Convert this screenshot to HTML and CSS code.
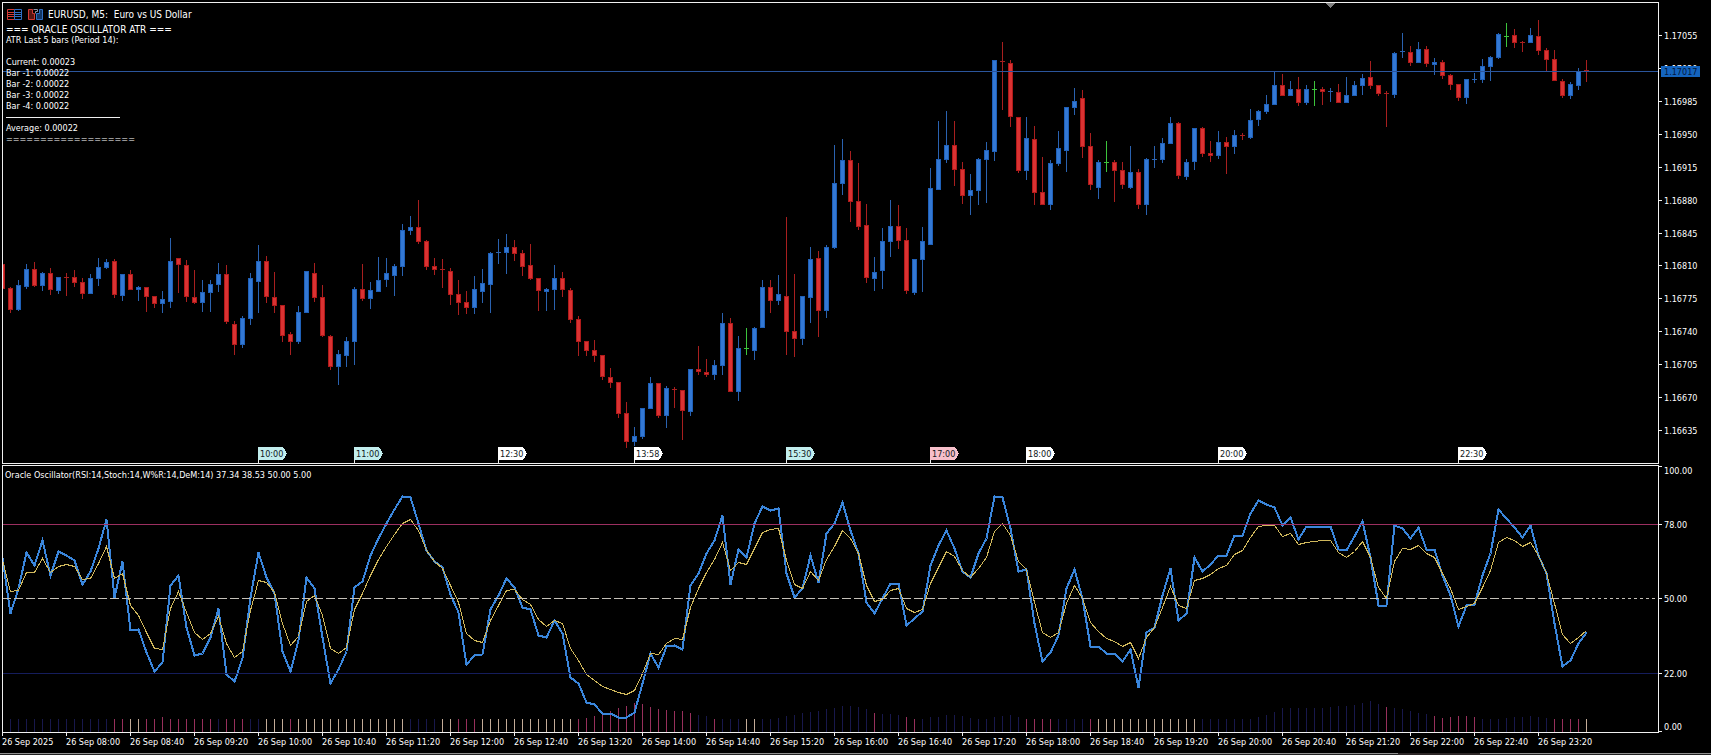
FILE: index.html
```html
<!DOCTYPE html>
<html lang="en">
<head>
    <meta charset="utf-8">
    <title>EURUSD, M5</title>
    <link rel="stylesheet" href="styles.css">
</head>
<body>
    <main class="terminal">
        <!-- Price chart -->
        <section class="panel price-panel">
            <svg id="price" class="plot"></svg>
            <div class="overlay">
                <h1 class="chart-title">
                    <svg class="icon" width="15" height="11" viewBox="0 0 15 11">
                        <path d="M7.5 .5H.5v10h7M1 3.5h6M1 5.5h6M1 7.5h6" fill="none" stroke="#d23a34"/>
                        <path d="M7.5 .5h7v10h-7zM8 3.5h6M8 5.5h6M8 7.5h6" fill="none" stroke="#2f6fc4"/>
                    </svg>
                    <svg class="icon" width="15" height="11" viewBox="0 0 15 11">
                        <path d="M.5 .5h4v4h2v6h-6z" fill="#5a1512" stroke="#d23a34"/>
                        <path d="M14.5 .5h-3v4h-3v6h6z" fill="#123766" stroke="#2f6fc4"/>
                        <path d="M5.5 .5h4v2h-2v2" fill="none" stroke="#8a94a8"/>
                    </svg>
                    <span>EURUSD, M5:&nbsp; Euro vs US Dollar</span>
                </h1>
                <div class="comment">
                    <p class="comment-title">=== ORACLE OSCILLATOR ATR ===</p>
                    <p>ATR Last 5 bars (Period 14):</p>
                    <p>&nbsp;</p>
                    <p>Current: 0.00023</p>
                    <p>Bar -1: 0.00022</p>
                    <p>Bar -2: 0.00022</p>
                    <p>Bar -3: 0.00022</p>
                    <p>Bar -4: 0.00022</p>
                    <hr>
                    <p>Average: 0.00022</p>
                    <p>===================</p>
                </div>
            </div>
        </section>
        <svg id="price-scale" class="scale"></svg>

        <!-- Oscillator -->
        <section class="panel osc-panel">
            <svg id="osc" class="plot"></svg>
            <h2 class="osc-title">Oracle Oscillator(RSI:14,Stoch:14,W%R:14,DeM:14) 37.34 38.53 50.00 5.00</h2>
        </section>
        <svg id="osc-scale" class="scale"></svg>

        <div id="times" class="times"></div>
    </main>
    <footer class="tabs"><span class="tab"></span></footer>
    <script src="chart.js"></script>
</body>
</html>
```
FILE: styles.css
```css
body {
    margin: 0;
    background-color: #000;
    color: #fff;
    font-family: "DejaVu Sans Condensed", "DejaVu Sans", sans-serif;
    font-stretch: condensed;
    font-size: 9px;
    line-height: 11px;
}
h1, h2, p {
    margin: 0;
    font-size: 9px;
    font-weight: normal;
    white-space: nowrap;
}
.terminal {
    display: grid;
    grid-template-columns: 1fr 52px;
    row-gap: 1px;
    padding: 2px 0 0 2px;
}
.panel {
    position: relative;
    border: 1px solid #f0f0f0;
    overflow: hidden;
}
.price-panel {
    height: 460px;
}
.osc-panel {
    height: 266px;
}
.plot {
    display: block;
    width: 100%;
    height: 100%;
    shape-rendering: crispEdges;
}
.scale {
    width: 100%;
    height: 100%;
    shape-rendering: crispEdges;
}
text {
    fill: #fff;
    font-size: 9px;
}

/* text over the price chart */
.overlay {
    position: absolute;
    top: 4px;
    left: 3px;
}
.chart-title {
    display: flex;
    align-items: center;
    gap: 6px;
    height: 14px;
    padding-left: 1px;
    font-size: 10px;
}
.chart-title span {
    margin-left: -1px;
}
.comment {
    padding-top: 3px;
}
.comment p {
    height: 11px;
}
.comment .comment-title {
    font-size: 10px;
}
.comment hr {
    width: 114px;
    margin: 5px 0;
    border: 0;
    border-top: 1px solid #f0f0f0;
}
.osc-title {
    position: absolute;
    top: 4px;
    left: 2px;
}

/* candles */
.up { fill: #3378d4; stroke: #1f60b8; }
.down { fill: #da3232; stroke: #b01a1a; }
.wick-up { fill: #2a62b0; }
.wick-down { fill: #a81f1f; }
.wick-flat { fill: #3cc43c; }
.bid { fill: #2b559c; }
.bid-box { fill: #1464be; }
.bid-text { fill: #03183c; }
.shift { fill: #808080; }

/* session flags */
.flag { fill: #fff; }
.flag.asia { fill: #c2eeee; }
.flag.close { fill: #f7bfca; }
.flag-text { fill: #101820; }
.tick { fill: #f0f0f0; }

/* oscillator */
.fast { fill: none; stroke: #3a86dc; stroke-width: 2; }
.slow { fill: none; stroke: #d0b85c; }
.level-high { fill: #9c2f60; }
.level-low { fill: #151d5c; }
.level-mid { stroke: #c4c0b8; stroke-dasharray: 9 3; }
.level-mid.future { stroke-dasharray: 3 3; }
.hist-n { fill: #18184c; }
.hist-r { fill: #98305c; }
.hist-w { fill: #c4ac98; }

.times {
    display: flex;
    height: 20px;
    margin-top: -1px;
    overflow: hidden;
}
.times span {
    flex: none;
    width: 64px;
    white-space: nowrap;
}
.times span::before {
    content: "";
    display: block;
    width: 1px;
    height: 3px;
    margin-bottom: 1px;
    background-color: #f0f0f0;
}
.tabs {
    height: 1px;
    border-top: 1px solid #909090;
    background-color: #222;
}
.tab {
    display: block;
    width: 82px;
    height: 2px;
    margin: -1px 231px 0 auto;
    background-color: #2c2626;
}
```
FILE: chart.js
```js
// one bar per 8px: colour, body top, body bottom, high, low
const bars = `r264 289 264 289,r288 310 287 313,b285 310 280 311,b269 287 264 289,r269 286 262 287,b273 286 272 291,r273 290 268 295,b277 291 277 294,r277 279 273 296,r277 283 270 287
r282 294 278 299,b278 294 274 294,b267 279 258 286,b262 268 259 269,r261 295 259 298,b274 296 274 301,r274 290 270 290,b287 290 286 301,r287 297 287 312,r296 304 296 308
b299 304 291 313,b261 302 238 308,r258 265 258 293,r265 297 260 302,r297 303 270 304,b292 303 280 312,b284 293 280 312,b274 285 263 292,r274 322 265 324,r324 345 321 355
b318 345 316 348,b278 319 273 325,b261 282 245 313,r261 297 256 303,r297 306 272 313,r305 336 305 342,r334 342 332 355,b312 342 306 344,b271 313 271 313,r273 298 263 302
r297 336 285 337,r336 367 335 370,b354 367 350 385,b341 356 337 367,b289 342 287 365,r289 299 264 301,b290 299 282 309,b280 292 257 292,b273 280 258 287,b266 276 264 296
b230 267 224 276,b227 231 216 235,r227 242 200 244,r241 267 240 270,r266 270 258 275,r269 271 259 288,r271 295 268 305,r294 303 280 315,r302 308 291 314,b289 308 276 314
b283 292 269 303,b253 285 252 313,b252 254 239 264,b247 253 234 274,r247 254 240 261,r253 267 250 276,r265 279 244 280,r278 291 278 311,b289 292 288 311,b278 290 265 310
r278 290 272 297,r290 320 288 323,r319 342 316 356,r341 351 341 356,r350 356 340 362,r355 377 355 380,r377 383 368 388,r382 414 382 418,r413 442 402 448,b436 442 427 446
b408 437 408 439,b383 409 377 409,r383 416 383 418,b388 416 386 428,r389 391 387 408,r390 411 390 440,b369 412 369 416,r369 372 346 375,r372 375 359 377,b365 375 360 380
b323 366 313 375,r323 392 318 392,b348 392 336 401,g348 349 328 355,b328 351 327 360,b287 328 280 328,r287 301 280 313,b294 301 275 305,r296 332 217 355,r331 339 274 357
b296 339 296 345,b259 298 247 323,r258 311 251 337,b247 311 245 318,b183 248 145 249,b160 184 139 195,r160 202 151 222,r201 227 163 230,r225 278 204 283,b272 279 257 291
b241 271 228 289,b226 242 200 257,r226 241 205 249,r240 291 228 294,b259 293 259 295,b241 260 227 292,b188 245 168 245,b159 190 121 190,b145 160 111 163,r145 170 121 186
r169 196 162 204,b190 196 174 215,b159 191 158 205,b150 160 142 203,b60 152 60 161,r61 63 42 110,r63 117 60 127,r117 171 117 173,b138 171 117 180,r139 193 126 205
r192 205 157 205,b163 205 160 210,b148 164 131 166,b107 151 107 172,b101 108 88 115,r98 147 90 158,r146 185 133 190,b162 188 160 199,g162 163 141 172,r162 171 160 202
r170 185 162 189,b172 188 146 189,r172 205 169 209,b159 205 158 215,b159 161 146 168,b143 160 138 163,b123 144 117 144,r123 176 122 179,b162 177 159 180,b128 162 128 170
r128 154 127 157,r153 156 141 162,b142 156 131 159,r142 147 137 174,b135 147 130 154,r135 137 133 140,b120 138 109 139,b111 120 110 126,b104 112 95 114,b85 105 72 105
r85 96 74 96,b89 96 81 96,r89 103 77 106,b89 103 85 105,g89 90 81 106,r89 92 87 105,b91 93 88 102,r92 103 84 103,b95 103 77 103,b85 96 81 96
b78 86 74 95,r77 86 61 89,r85 94 85 96,r93 95 91 127,b53 95 52 98,b51 53 33 58,r52 63 46 66,b49 63 42 63,r49 64 46 67,b62 65 58 75
r62 76 60 79,r75 85 74 90,r84 98 84 101,b79 98 79 104,b79 81 73 83,b66 80 59 83,b57 67 56 81,b34 58 33 59,g36 37 23 47,r35 43 29 48
r42 44 41 52,b35 43 28 43,r36 51 20 55,r50 60 48 71,r59 81 50 81,r81 96 79 98,b84 96 82 99,b71 86 68 90,r70 72 60 82`.split(/[,\n]/);

const fast = [
    558, 613, 588, 552, 565, 540, 575, 551, 555, 560, 584, 571, 548, 519, 597, 561, 630, 629, 652, 671,
    662, 585, 575, 627, 655, 653, 637, 608, 674, 681, 658, 597, 552, 577, 593, 651, 671, 640, 577, 588,
    637, 683, 669, 651, 587, 581, 555, 538, 523, 509, 496, 497, 523, 550, 561, 567, 594, 612, 664, 655,
    654, 609, 595, 578, 587, 607, 609, 635, 637, 620, 633, 677, 683, 702, 704, 713, 713, 717, 717, 712,
    683, 653, 667, 646, 645, 649, 585, 573, 553, 540, 515, 584, 549, 557, 523, 506, 510, 508, 573, 597,
    588, 555, 582, 533, 523, 502, 530, 553, 602, 613, 598, 583, 583, 625, 618, 611, 565, 545, 530, 548,
    571, 577, 553, 538, 496, 497, 528, 571, 569, 623, 661, 652, 635, 588, 569, 598, 646, 646, 653, 653,
    661, 649, 687, 632, 627, 595, 568, 620, 613, 557, 571, 564, 555, 555, 535, 535, 513, 500, 504, 507,
    525, 517, 539, 526, 526, 526, 526, 549, 550, 536, 521, 557, 605, 605, 525, 528, 538, 527, 549, 549,
    575, 595, 626, 605, 604, 575, 553, 509, 518, 527, 537, 525, 555, 573, 623, 666, 660, 643, 632
];

const slow = [
    560, 591, 590, 572, 572, 558, 572, 566, 564, 566, 579, 578, 563, 546, 578, 573, 605, 615, 632, 648,
    649, 608, 591, 612, 632, 639, 633, 616, 643, 657, 651, 610, 580, 582, 592, 623, 645, 636, 601, 595,
    615, 648, 653, 647, 609, 593, 575, 559, 546, 534, 523, 519, 530, 550, 561, 568, 585, 602, 633, 640,
    642, 620, 605, 590, 589, 599, 604, 619, 626, 620, 623, 648, 660, 674, 680, 686, 689, 692, 694, 690,
    673, 653, 654, 643, 638, 639, 607, 588, 572, 559, 542, 570, 562, 564, 548, 532, 529, 528, 560, 584,
    588, 571, 580, 559, 546, 530, 538, 553, 585, 601, 599, 590, 588, 608, 612, 609, 583, 567, 551, 556,
    570, 577, 568, 557, 531, 523, 535, 561, 569, 602, 632, 637, 632, 603, 585, 598, 622, 631, 638, 641,
    646, 642, 658, 637, 627, 607, 586, 605, 608, 580, 578, 574, 568, 565, 554, 550, 537, 526, 525, 525,
    536, 533, 544, 542, 541, 540, 540, 552, 557, 551, 541, 557, 587, 598, 561, 548, 549, 545, 553, 557,
    573, 588, 609, 606, 603, 587, 570, 542, 537, 540, 546, 542, 555, 573, 603, 634, 643, 637, 630
];

// histogram colour runs, and the bars taller than the usual 13px
const histColours = [
    ['n', 14], ['r', 2], ['w', 2], ['r', 9], ['n', 1], ['r', 3], ['n', 2], ['w', 3], ['r', 1], ['w', 14],
    ['n', 4], ['w', 2], ['r', 3], ['w', 12], ['r', 15], ['n', 2], ['r', 1], ['n', 3], ['w', 2], ['n', 14],
    ['r', 1], ['n', 3], ['r', 2], ['n', 13], ['r', 4], ['n', 4], ['r', 1], ['w', 13], ['n', 23], ['r', 1],
    ['n', 5], ['r', 6], ['n', 9], ['r', 4], ['w', 1]
];
const histTops = {
    20: [717],
    73: [718, 716, 714, 711, 708, 706, 703, 704, 707, 709, 710, 711, 711, 713, 715, 716],
    97: [718, 716, 715, 713, 712, 711, 709, 708, 706, 706, 707, 709, 713, 714, 714, 715, 717],
    116: [717, 717, 715, 715, 716, 718],
    124: [717, 716, 715, 717],
    157: [717, 715, 712, 708, 708, 708, 708, 708, 708, 707, 706, 706, 705, 703, 701, 704, 707, 708, 709, 711, 713, 714, 716, 718, 717, 716, 716, 717],
    188: [718, 717, 717, 716, 717, 718]
};

const flags = [
    [32, '10:00', 'asia'], [44, '11:00', 'asia'], [62, '12:30', ''], [79, '13:58', ''], [98, '15:30', 'asia'],
    [116, '17:00', 'close'], [128, '18:00', ''], [152, '20:00', ''], [182, '22:30', '']
];

const barX = i => 2 + i * 8;
const rect = (cls, x, y, w, h) => `<rect class="${cls}" x="${x}" y="${y}" width="${w}" height="${h}"/>`;
const text = (cls, x, y, s) => `<text class="${cls}" x="${x}" y="${y}">${s}</text>`;
const origin = (x, y, s) => `<g transform="translate(${-x} ${-y})">${s}</g>`;
const put = (id, s) => { document.getElementById(id).innerHTML = s; };

function drawPrice() {
    let out = '';
    bars.forEach((bar, i) => {
        const dir = { r: 'down', b: 'up', g: 'flat' }[bar[0]];
        const [top, bottom, high, low] = bar.slice(1).split(' ').map(Number);
        const x = barX(i);
        out += rect('wick-' + dir, x, high, 1, low - high);
        if (bottom - top < 3) {
            out += rect('wick-' + dir, x - 2, top, 5, 1);
        } else {
            out += rect(dir, x - 1.5, top + 0.5, 4, bottom - top - 1);
        }
    });
    out += rect('bid', 3, 71, '100%', 1);
    out += '<path class="shift" d="M1326 3h9l-4.500 5z"/>';
    flags.forEach(([i, label, cls]) => {
        const x = barX(i);
        out += rect('tick', x, 447, 1, 16);
        out += `<path class="flag ${cls}" d="M${x} 447h25l4 6.500l-4 6.500h-25z"/>`;
        out += text('flag-text', x + 2, 457, label);
    });
    put('price', origin(3, 3, out));
}

function drawPriceScale() {
    let out = '';
    for (let n = 0; n < 13; n++) {
        const y = Math.round(35 + n * 32.92);
        out += rect('tick', 0, y, 3, 1);
        out += text('', 5, y + 4, ((117055 - n * 35) / 100000).toFixed(5));
    }
    out += rect('bid-box', 2, 66, 39, 11);
    out += text('bid-text', 5, 75, '1.17017');
    put('price-scale', origin(0, 2, out));
}

function drawOscillator() {
    const line = (cls, ys) => `<polyline class="${cls}" points="${ys.map((y, i) => barX(i) + 0.5 + ',' + (y + 0.5)).join(' ')}"/>`;
    const tops = {};
    for (const start in histTops) {
        histTops[start].forEach((y, n) => { tops[Number(start) + n] = y; });
    }
    let out = '';
    let i = 0;
    histColours.forEach(([colour, count]) => {
        for (let n = 0; n < count; n++, i++) {
            const y = tops[i] || 719;
            out += rect('hist-' + colour, barX(i), y, 1, 732 - y);
        }
    });
    out += line('fast', fast) + line('slow', slow);
    out += rect('level-high', 3, 524, '100%', 1);
    out += rect('level-low', 3, 673, '100%', 1);
    out += '<line class="level-mid" x1="2" x2="1586" y1="598.5" y2="598.5"/>';
    out += '<line class="level-mid future" x1="1586" x2="101%" y1="598.5" y2="598.5"/>';
    put('osc', origin(3, 466, out));
}

function drawOscillatorScale() {
    let out = '';
    [[466, 474, '100.00'], [524, 528, '78.00'], [598, 602, '50.00'], [673, 677, '22.00'], [731, 730, '0.00']].forEach(([y, base, label]) => {
        out += rect('tick', 0, y, 3, 1) + text('', 5, base, label);
    });
    put('osc-scale', origin(0, 465, out));
}

function drawTimes() {
    let out = '<span>26 Sep 2025</span>';
    for (let m = 480; m <= 1400; m += 40) {
        const hh = String(Math.floor(m / 60)).padStart(2, '0');
        const mm = String(m % 60).padStart(2, '0');
        out += `<span>26 Sep ${hh}:${mm}</span>`;
    }
    put('times', out);
}

drawPrice();
drawPriceScale();
drawOscillator();
drawOscillatorScale();
drawTimes();
```
